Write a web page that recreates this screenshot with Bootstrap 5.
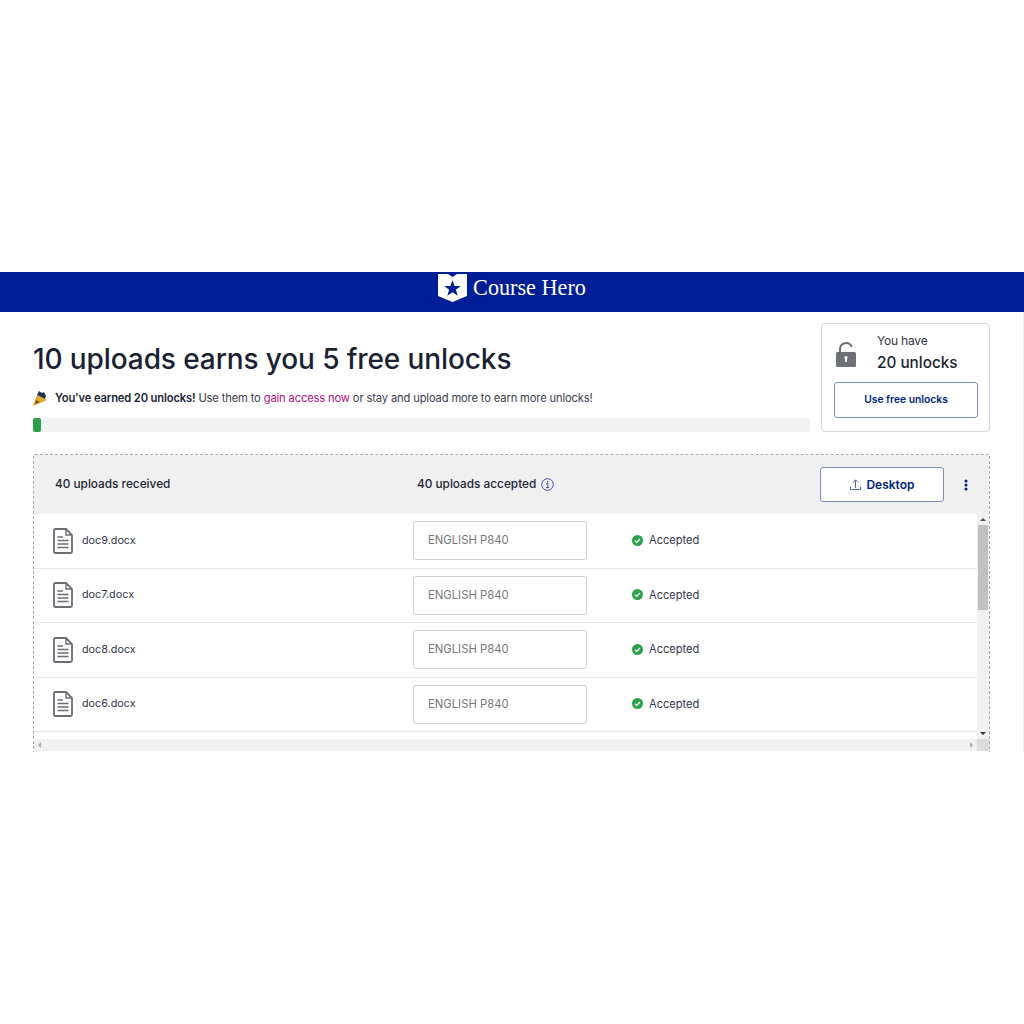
<!DOCTYPE html>
<html lang="en">
<head>
    <meta charset="UTF-8">
    <meta name="viewport" content="width=device-width, initial-scale=1.0">
    <title>Course Hero Uploads</title>
    <link rel="stylesheet" href="https://cdn.jsdelivr.net/npm/bootstrap@5.3.0/dist/css/bootstrap.min.css">
    <style>
        body { font-family: Inter, "Liberation Sans", sans-serif; color: #1b1f33; background: #fff; }
        .page-wrap { padding-top: 272px; height: 752px; overflow: hidden; }
        .brand-bar { height: 40px; background: #001e96; color: #fff; padding-bottom: 8px; }
        .brand-logo { margin-right: 6px; }
        .brand-name { font-family: "Liberation Serif", serif; font-size: 22.2px; line-height: 1; }
        .main-area { padding: 11px 33px 0 33px; height: 440px; border-right: 1px solid #f0f0f0; }
        .top-part { height: 120px; }
        .left-part { width: 777px; padding-top: 19px; }
        .page-title { font-size: 28px; font-weight: 500; line-height: 34px; margin: 0; color: #1b1f33; letter-spacing: -0.1px; }
        .earn-line { font-size: 11.2px; letter-spacing: -0.15px; line-height: 16px; margin-top: 14px; color: #3a3d4d; }
        .earn-line b { font-weight: 600; color: #1b1f33; }
        .earn-line a { color: #b5127f; text-decoration: none; }
        .prog-track { height: 14px; background: #f3f3f3; margin-top: 12px; }
        .prog-fill { width: 8px; height: 14px; background: #2ba14b; border-radius: 2px; }
        .unlock-box { width: 169px; height: 109px; border: 1px solid #d5d6da; border-radius: 4px; padding: 10px 12px 0; }
        .lock-ico { margin: 8px 0 0 1px; }
        .have-small { font-size: 12px; line-height: 14px; color: #33364a; letter-spacing: -0.2px; }
        .have-big { font-size: 15.3px; font-weight: 500; line-height: 20px; margin-top: 5px; color: #1b1f33; }
        .outline-btn { border: 1px solid #7f8cc6; border-radius: 3px; background: #fff; color: #001e7d; font-weight: 600; padding: 0; }
        .use-btn { width: 144px; height: 36px; font-size: 10.3px; margin-top: 9px; }
        .desk-btn { width: 124px; height: 35px; font-size: 12px; }
        .drop-zone { margin-top: 11px; border: 1px dashed #a9a9a9; border-bottom: 0; border-radius: 2px 2px 0 0; width: 957px; height: 298px; }
        .drop-head { height: 59px; background: #f0f0f0; padding-left: 21px; font-size: 11.8px; font-weight: 500; color: #1b1f33; }
        .head-received { width: 362px; }
        .head-accepted { width: 403px; }
        .info-ico { margin-left: 5px; }
        .kebab { width: 44px; }
        .scroll-body { height: 225px; }
        .scroll-rows { width: 943px; height: 226px; overflow: hidden; }
        .doc-row { height: 54.5px; border-bottom: 1px solid #e6e6e6; padding-left: 19px; color: #33364a; }
        .doc-name { width: 340px; padding-left: 9px; font-size: 10.8px; }
        .course-box { width: 174px; height: 39px; border: 1px solid #cfd0d4; border-radius: 3px; padding-left: 14px; color: #777; margin-right: 45px; font-size: 11.3px; }
        .status-ico { margin-bottom: 1px; }
        .status-text { padding-left: 6px; font-size: 11.1px; }
        .v-bar { width: 12px; height: 225px; background: #f1f1f1; }
        .v-thumb { width: 10px; height: 85px; background: #c1c1c1; margin: 0 auto; }
        .arrow-up { width: 0; height: 0; border: 3px solid transparent; border-top: 0; border-bottom: 3px solid #555; }
        .arrow-down { width: 0; height: 0; border: 3px solid transparent; border-bottom: 0; border-top: 3px solid #333; }
        .arrow-left { width: 0; height: 0; border: 3px solid transparent; border-left: 0; border-right: 3px solid #aaa; }
        .arrow-right { width: 0; height: 0; border: 3px solid transparent; border-right: 0; border-left: 3px solid #aaa; }
        .h-bar { height: 12px; background: #f1f1f1; padding: 0 4px; width: 943px; }
        .h-corner { width: 12px; height: 12px; background: #dcdcdc; }
    </style>
</head>
<body>
    <div class="page-wrap">
        <div class="brand-bar d-flex justify-content-center align-items-center">
            <svg class="brand-logo" width="29" height="28" viewBox="0 0 29 28">
                <path d="M0 0 L10 0 L14.5 3 L19 0 L29 0 L29 22 L14.5 28 L0 22 Z" fill="#fff"/>
                <path d="M14.5 6 L16.6 11.9 L22.8 12 L17.9 15.8 L19.7 21.7 L14.5 18.2 L9.3 21.7 L11.1 15.8 L6.2 12 L12.4 11.9 Z" fill="#001e96"/>
            </svg>
            <span class="brand-name">Course Hero</span>
        </div>

        <div class="main-area">
            <div class="top-part d-flex justify-content-between">
                <div class="left-part">
                    <h1 class="page-title">10 uploads earns you 5 free unlocks</h1>
                    <div class="earn-line d-flex align-items-center">
                        <svg class="me-2" width="14" height="15" viewBox="0 0 14 15">
                            <path d="M4 4 L14 9 L0 15 Z" fill="#e3aa2a"/>
                            <path d="M4 4 L6 0 L9 2 L11 1 L13 5 L12 8 Z" fill="#27304f"/>
                            <path d="M3 9 L7 11 L2 13 Z" fill="#7b4f12"/>
                        </svg>
                        <span><b>You've earned 20 unlocks!</b> Use them to <a href="#">gain access now</a> or stay and upload more to earn more unlocks!</span>
                    </div>
                    <div class="prog-track"><div class="prog-fill"></div></div>
                </div>
                <div class="unlock-box">
                    <div class="d-flex">
                        <svg class="lock-ico" width="22" height="26" viewBox="0 0 22 26">
                            <path d="M5 12 V7 A6 6 0 0 1 16.6 5" fill="none" stroke="#6e7078" stroke-width="2"/>
                            <rect x="1" y="10" width="20" height="15" rx="1.5" fill="#6e7078"/>
                            <rect x="10" y="15" width="2" height="5" fill="#fff"/>
                            <circle cx="11" cy="15.5" r="1.6" fill="#fff"/>
                        </svg>
                        <div class="ms-3 ps-1 have-wrap">
                            <div class="have-small">You have</div>
                            <div class="have-big">20 unlocks</div>
                        </div>
                    </div>
                    <button class="outline-btn use-btn">Use free unlocks</button>
                </div>
            </div>

            <div class="drop-zone">
                <div class="drop-head d-flex align-items-center">
                    <div class="head-received">40 uploads received</div>
                    <div class="head-accepted d-flex align-items-center">
                        <span>40 uploads accepted</span>
                        <svg class="info-ico" width="13" height="13" viewBox="0 0 13 13">
                            <circle cx="6.5" cy="6.5" r="5.8" fill="none" stroke="#3f4fa3" stroke-width="1"/>
                            <path d="M5.2 5.6 H6.8 V9.6 M5 9.6 H8.2" fill="none" stroke="#3f4fa3" stroke-width="1"/>
                            <rect x="6" y="3" width="1.2" height="1.3" fill="#3f4fa3"/>
                        </svg>
                    </div>
                    <button class="outline-btn desk-btn d-flex justify-content-center align-items-center gap-1">
                        <svg width="13" height="13" viewBox="0 0 13 13">
                            <path d="M6.5 10 V2 M3.8 4.5 L6.5 1.8 L9.2 4.5 M1.5 8.5 V11.5 H11.5 V8.5" fill="none" stroke="#5a68ad" stroke-width="1"/>
                        </svg>
                        <span>Desktop</span>
                    </button>
                    <div class="kebab d-flex justify-content-center">
                        <svg width="4" height="12" viewBox="0 0 4 12">
                            <circle cx="2" cy="2" r="1.5" fill="#001e7d"/>
                            <circle cx="2" cy="6" r="1.5" fill="#001e7d"/>
                            <circle cx="2" cy="10" r="1.5" fill="#001e7d"/>
                        </svg>
                    </div>
                </div>
                <div class="scroll-body d-flex">
                    <div class="scroll-rows" id="docRows"></div>
                    <div class="v-bar d-flex flex-column align-items-center">
                        <div class="arrow-up mt-1 mb-1"></div>
                        <div class="v-thumb"></div>
                        <div class="arrow-down mt-auto mb-1"></div>
                    </div>
                </div>
                <div class="d-flex">
                    <div class="h-bar d-flex justify-content-between align-items-center">
                        <div class="arrow-left"></div>
                        <div class="arrow-right"></div>
                    </div>
                    <div class="h-corner"></div>
                </div>
            </div>
        </div>
    </div>

    <script>
        const docs = ["doc9.docx", "doc7.docx", "doc8.docx", "doc6.docx"];
        const rows = document.getElementById("docRows");

        docs.forEach(function(name) {
            const row = document.createElement("div");
            row.className = "doc-row d-flex align-items-center";
            row.innerHTML = `
                <svg width="20" height="26" viewBox="0 0 20 26">
                    <path d="M1 2.5 Q1 1 2.5 1 H13 L19 7 V23.5 Q19 25 17.5 25 H2.5 Q1 25 1 23.5 Z" fill="none" stroke="#6b6d75" stroke-width="1.8"/>
                    <path d="M13 1 V7 H19" fill="none" stroke="#6b6d75" stroke-width="1.4"/>
                    <path d="M4.5 9 H10 M4.5 12.5 H15.5 M4.5 16 H15.5 M4.5 19.5 H15.5" stroke="#6b6d75" stroke-width="1.4"/>
                </svg>
                <div class="doc-name">${name}</div>
                <div class="course-box d-flex align-items-center">ENGLISH P840</div>
                <svg class="status-ico" width="11" height="11" viewBox="0 0 11 11">
                    <circle cx="5.5" cy="5.5" r="5.5" fill="#2ba14b"/>
                    <path d="M3 5.7 L4.8 7.3 L8 4" fill="none" stroke="#fff" stroke-width="1.2"/>
                </svg>
                <div class="status-text">Accepted</div>
            `;
            rows.appendChild(row);
        });
    </script>
    <script src="https://cdn.jsdelivr.net/npm/bootstrap@5.3.0/dist/js/bootstrap.bundle.min.js"></script>
</body>
</html>
